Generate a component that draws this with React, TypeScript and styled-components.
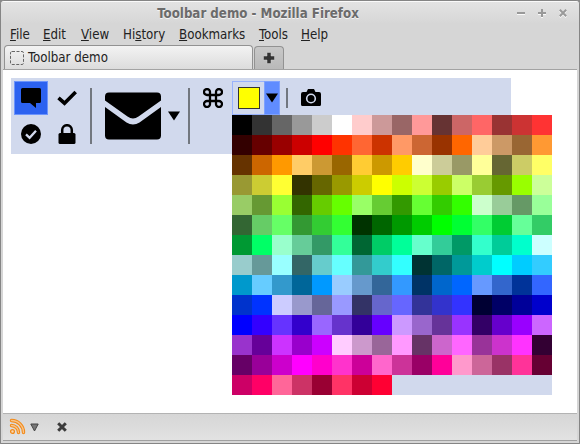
import React from "react";
import styled, { createGlobalStyle } from "styled-components";

const GlobalStyle = createGlobalStyle`
  * { box-sizing: border-box; }
  html, body { margin: 0; background: #8a8a8a; }
  body {
    font: 13.2px/16px "DejaVu Sans Condensed", "DejaVu Sans", sans-serif;
    font-stretch: condensed;
    color: #222;
  }
  svg { display: block; }
`;

const Window = styled.div`
  width: 580px;
  height: 444px;
  display: flex;
  flex-direction: column;
  border: 1px solid #858585;
  border-radius: 4px 4px 0 0;
  background: #d6d6d6;
  padding: 0 2px 2px;
  overflow: hidden;
`;

const TitleBar = styled.header`
  height: 23px;
  margin: 0 -2px;
  flex: none;
  display: grid;
  grid-template-columns: 70px 1fr 70px;
  align-items: center;
  background: linear-gradient(#e3e3e3, #d6d6d6);
  border-top: 1px solid #fafafa;
`;

const Title = styled.h1`
  grid-column: 2;
  margin: 0;
  padding-right: 64px;
  text-align: center;
  font-size: 13.2px;
  font-weight: bold;
  line-height: 21px;
  white-space: nowrap;
  color: #6b6b6b;
  text-shadow: 0 1px #f4f4f4;
`;

const WindowControls = styled.div`
  display: flex;
  gap: 13px;
  padding: 1px 0 0 8px;
`;

const MenuBar = styled.nav`
  display: flex;
  height: 20px;
  flex: none;
  padding: 1px 0 0 7px;
`;

const MenuItem = styled.span<{ $width: number }>`
  width: ${(p) => p.$width}px;
  white-space: nowrap;
  line-height: 19px;
`;

const Accel = styled.span`
  text-decoration: underline;
  text-underline-offset: 1px;
  text-decoration-thickness: 1px;
`;

const TabStrip = styled.div`
  display: flex;
  align-items: flex-end;
  gap: 1px;
  height: 26px;
  flex: none;
  padding: 0 1px;
  border-bottom: 1px solid #a3a3a3;
`;

const Tab = styled.div<{ $width: number; $active?: boolean }>`
  width: ${(p) => p.$width}px;
  height: ${(p) => (p.$active ? 24 : 23)}px;
  display: flex;
  align-items: center;
  justify-content: ${(p) => (p.$active ? "flex-start" : "center")};
  gap: 4px;
  padding-left: ${(p) => (p.$active ? 5 : 0)}px;
  border: 1px solid #929292;
  border-bottom: 0;
  border-radius: 4px 4px 0 0;
  background: ${(p) => (p.$active ? "linear-gradient(#f3f3f3, #dcdcdc)" : "linear-gradient(#c8c8c8, #b9b9b9)")};
`;

const Page = styled.main`
  height: 343px;
  flex: none;
  background: #fff;
  padding: 8px;
`;

const Toolbar = styled.div`
  width: 500px;
  height: 76px;
  display: flex;
  align-items: flex-start;
  padding: 3px;
  background: #d1d9ed;
  color: #000;
`;

const ButtonGrid = styled.div`
  display: grid;
  grid-template-columns: 34px 34px;
  gap: 2px;
`;

const ToolButton = styled.button<{ $selected?: boolean }>`
  width: 34px;
  height: 34px;
  display: flex;
  align-items: center;
  justify-content: center;
  padding: 0;
  color: inherit;
  border: 1px solid ${(p) => (p.$selected ? "#6c94fc" : "transparent")};
  background: ${(p) => (p.$selected ? "#2c62f0" : "transparent")};
`;

const Separator = styled.div<{ $height: number }>`
  width: 2px;
  height: ${(p) => p.$height}px;
  margin: 7px 6px 0;
  flex: none;
  background: #72777f;
`;

const MailButton = styled.div`
  width: 84px;
  height: 70px;
  display: flex;
  align-items: center;
  gap: 7px;
  padding-left: 7px;
`;

const ColorPicker = styled.div`
  position: relative;
  display: flex;
  width: 48px;
  height: 34px;
  margin-left: 2px;
`;

const SwatchButton = styled.div`
  width: 32px;
  padding: 5px;
  border: 1px solid #98b2fc;
  border-right: 0;
`;

const Swatch = styled.div`
  width: 22px;
  height: 22px;
  border: 1px solid #333;
  background: #ff0;
`;

const PickerArrow = styled.div`
  width: 16px;
  border: 1px solid #7ea1fe;
  background: #608cff;
  display: flex;
  align-items: center;
  justify-content: center;
`;

const Palette = styled.div`
  position: absolute;
  left: 0;
  top: 34px;
  width: 320px;
  height: 280px;
  display: grid;
  grid-template-columns: repeat(16, 20px);
  grid-auto-rows: 20px;
  background: #d1d9ed;
`;

const PaletteCell = styled.div<{ $color: string }>`
  background: ${(p) => p.$color};
`;

const StatusBar = styled.footer`
  flex: 1;
  display: flex;
  align-items: center;
  padding: 0 0 1px 6px;
  border-top: 1px solid #b3b3b3;
  border-bottom: 1px solid #a0a0a0;
  background: linear-gradient(#d6d6d6, #e2e2e2);
`;

const FeedArrow = styled.div`
  margin: 1px 18px 0 4px;
`;

const ROWS = [
  "000 333 666 999 ccc fff fcc c99 966 f99 633 c66 f66 933 c33 f33",
  "300 600 900 c00 f00 f30 f63 c30 f96 c63 930 f60 fc9 c96 963 f93",
  "630 c60 f90 fc6 c93 960 fc3 c90 fc0 ffc cc9 996 ff9 663 cc6 ff6",
  "993 cc3 ff3 330 660 990 cc0 ff0 cf0 cf3 9c0 cf6 9c3 690 9f0 cf9",
  "9c6 693 9f3 360 6c0 6f0 9f6 6c3 390 6f3 3c0 3f0 cfc 9c9 696 9f9",
  "363 6c6 6f6 393 3c3 3f3 030 060 090 0c0 0f0 0f3 3f6 0c3 6f9 3c6",
  "093 0f6 9fc 6c9 396 3f9 063 0c6 0f9 6fc 3c9 096 3fc 0c9 0fc cff",
  "9cc 699 9ff 366 6cc 6ff 399 3cc 3ff 033 066 099 0cc 0ff 0cf 3cf",
  "09c 6cf 39c 069 09f 9cf 69c 369 39f 036 06c 06f 69f 36c 039 36f",
  "03c 03f ccf 99c 669 99f 336 66c 66f 339 33c 33f 003 006 009 00c",
  "00f 30f 63f 30c 96f 63c 309 60f c9f 96c 639 93f 306 60c 90f c6f",
  "93c 609 c3f 90c c0f fcf c9c 969 f9f 636 c6c f6f 939 c3c f3f 303",
  "606 909 c0c f0f f0c f3c c09 f6c c39 906 f09 f9c c69 936 f39 603",
  "c06 f06 f69 c36 903 f36 c03 f03",
];
const COLORS = ROWS.flatMap((row) => row.split(" "));

const MENUS = [
  { before: "", key: "F", after: "ile", width: 33 },
  { before: "", key: "E", after: "dit", width: 38 },
  { before: "", key: "V", after: "iew", width: 42 },
  { before: "Hi", key: "s", after: "tory", width: 56 },
  { before: "", key: "B", after: "ookmarks", width: 80 },
  { before: "", key: "T", after: "ools", width: 42 },
  { before: "", key: "H", after: "elp", width: 40 },
];

const BubbleIcon = () => (
  <svg width="20" height="20" viewBox="0 0 20 20">
    <path d="M1.500 0h17A1.500 1.500 0 0 1 20 1.500v12a1.500 1.500 0 0 1-1.500 1.500H15v5l-6-5H1.500A1.500 1.500 0 0 1 0 13.500v-12A1.500 1.500 0 0 1 1.500 0z" />
  </svg>
);

const CheckIcon = () => (
  <svg width="20" height="20" viewBox="0 0 20 20">
    <path d="M1.500 9.800 7.500 15.200 18.700 4" fill="none" stroke="#000" strokeWidth="3.600" />
  </svg>
);

const CheckCircleIcon = () => (
  <svg width="20" height="20" viewBox="0 0 20 20">
    <circle cx="10" cy="10" r="10" />
    <path d="m5 10.400 3.600 3.400L15 6.800" fill="none" stroke="#d1d9ed" strokeWidth="2.300" />
  </svg>
);

const LockIcon = () => (
  <svg width="20" height="20" viewBox="0 0 20 20">
    <rect x="1.500" y="9" width="17" height="11" rx="1.500" />
    <path d="M5.200 10V6a4.800 4.800 0 0 1 9.600 0v4" fill="none" stroke="#000" strokeWidth="2.500" />
  </svg>
);

const MailIcon = () => (
  <svg width="56" height="48" viewBox="0 0 56 48">
    <path d="M4 .5h48a4 4 0 0 1 4 4V8.500L33.500 24.500q-5.500 4-11 0L0 8.500v-4a4 4 0 0 1 4-4z" />
    <path d="M0 15l21.500 15.500q6.500 4 13 0L56 15v28.500a4 4 0 0 1-4 4H4a4 4 0 0 1-4-4z" />
  </svg>
);

const CommandIcon = () => (
  <svg width="20" height="20" viewBox="0 0 20 20">
    <path
      d="M7 7H4.200A3 3 0 1 1 7 4.200v11.600A3 3 0 1 1 4.200 13h11.600a3 3 0 1 1-2.800 2.800V4.200A3 3 0 1 1 15.800 7z"
      fill="none"
      stroke="#000"
      strokeWidth="2.300"
    />
  </svg>
);

const CameraIcon = () => (
  <svg width="20" height="20" viewBox="0 0 20 20">
    <path d="M5.500 4 7 1h6l1.500 3H18a2 2 0 0 1 2 2v10.500a1.500 1.500 0 0 1-1.500 1.500h-17A1.500 1.500 0 0 1 0 16.500V6a2 2 0 0 1 2-2z" />
    <circle cx="10" cy="10.500" r="4.300" fill="none" stroke="#d1d9ed" strokeWidth="1.600" />
  </svg>
);

const ArrowIcon = () => (
  <svg width="12" height="10" viewBox="0 0 12 10">
    <path d="M0 .5h12L6 9.500z" />
  </svg>
);

const FeedIcon = () => (
  <svg width="17" height="17" viewBox="0 0 17 17" fill="none" strokeLinecap="round">
    <g stroke="#f28a18" strokeWidth="3.400">
      <path d="M2.500 2.500A12 12 0 0 1 14.500 14.500" />
      <path d="M2.500 7.500a7 7 0 0 1 7 7" />
    </g>
    <g stroke="#f8c48b" strokeWidth="1.300">
      <path d="M2.500 2.500A12 12 0 0 1 14.500 14.500" />
      <path d="M2.500 7.500a7 7 0 0 1 7 7" />
    </g>
    <circle cx="3.500" cy="13.500" r="1.900" stroke="#f28a18" strokeWidth="1.300" fill="#f8d8b4" />
  </svg>
);

export default function App() {
  return (
    <>
      <GlobalStyle />
      <Window>
        <TitleBar>
          <Title>Toolbar demo - Mozilla Firefox</Title>
          <WindowControls>
            {["M0 5h8", "M0 5h8M4 1v8", "M.8 1.800l6.400 6.400M7.200 1.800.8 8.200"].map((d) => (
              <svg key={d} width="8" height="11" viewBox="0 0 8 11" fill="none" strokeWidth="2">
                <path d={d} stroke="#fafafa" transform="translate(0 1)" />
                <path d={d} stroke="#999" />
              </svg>
            ))}
          </WindowControls>
        </TitleBar>
        <MenuBar>
          {MENUS.map((m) => (
            <MenuItem key={m.key} $width={m.width}>
              {m.before}
              <Accel>{m.key}</Accel>
              {m.after}
            </MenuItem>
          ))}
        </MenuBar>
        <TabStrip>
          <Tab $width={249} $active>
            <svg width="14" height="14" viewBox="0 0 14 14">
              <rect x=".5" y=".5" width="13" height="13" rx="1.500" fill="none" stroke="#666" strokeDasharray="3 1.500" />
            </svg>
            Toolbar demo
          </Tab>
          <Tab $width={30}>
            <svg width="12" height="12" viewBox="0 0 12 12">
              <path d="M4 .5h4V4h3.500v4H8v3.500H4V8H.5V4H4z" fill="#333" stroke="#d0d0d0" strokeWidth=".5" />
            </svg>
          </Tab>
        </TabStrip>
        <Page>
          <Toolbar>
            <ButtonGrid>
              <ToolButton $selected><BubbleIcon /></ToolButton>
              <ToolButton><CheckIcon /></ToolButton>
              <ToolButton><CheckCircleIcon /></ToolButton>
              <ToolButton><LockIcon /></ToolButton>
            </ButtonGrid>
            <Separator $height={56} />
            <MailButton>
              <MailIcon />
              <ArrowIcon />
            </MailButton>
            <Separator $height={56} />
            <ToolButton><CommandIcon /></ToolButton>
            <ColorPicker>
              <SwatchButton><Swatch /></SwatchButton>
              <PickerArrow><ArrowIcon /></PickerArrow>
              <Palette>
                {COLORS.map((c) => (
                  <PaletteCell key={c} $color={`#${c}`} />
                ))}
              </Palette>
            </ColorPicker>
            <Separator $height={20} />
            <ToolButton><CameraIcon /></ToolButton>
          </Toolbar>
        </Page>
        <StatusBar>
          <FeedIcon />
          <FeedArrow>
            <svg width="9" height="9" viewBox="0 0 9 9">
              <path d="M.8 1h7.400L4.500 8z" fill="#777" stroke="#444" />
            </svg>
          </FeedArrow>
          <svg width="10" height="10" viewBox="0 0 10 10">
            <path d="m1.200 1.200 7.600 7.600m0-7.600L1.200 8.800" stroke="#3c3c3c" strokeWidth="3" />
          </svg>
        </StatusBar>
      </Window>
    </>
  );
}
